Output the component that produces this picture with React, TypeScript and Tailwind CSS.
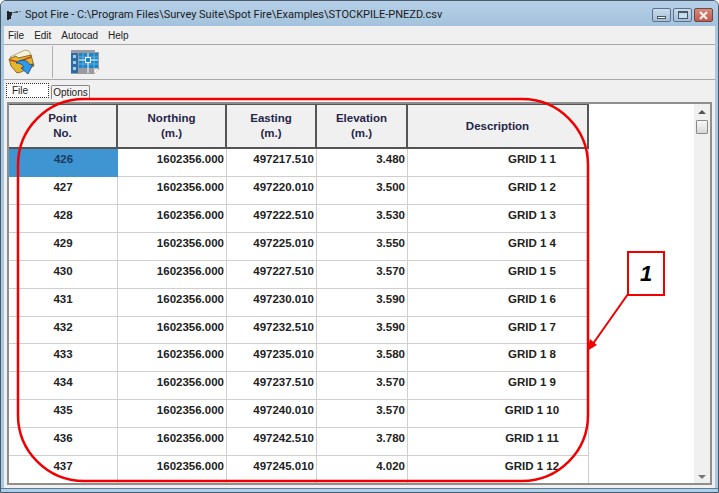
import React from "react";

const rows = [
  ["426", "497217.510", "3.480", "GRID 1 1"],
  ["427", "497220.010", "3.500", "GRID 1 2"],
  ["428", "497222.510", "3.530", "GRID 1 3"],
  ["429", "497225.010", "3.550", "GRID 1 4"],
  ["430", "497227.510", "3.570", "GRID 1 5"],
  ["431", "497230.010", "3.590", "GRID 1 6"],
  ["432", "497232.510", "3.590", "GRID 1 7"],
  ["433", "497235.010", "3.580", "GRID 1 8"],
  ["434", "497237.510", "3.570", "GRID 1 9"],
  ["435", "497240.010", "3.570", "GRID 1 10"],
  ["436", "497242.510", "3.780", "GRID 1 11"],
  ["437", "497245.010", "4.020", "GRID 1 12"],
];

const cols = "grid w-[580px] grid-cols-[109px_109px_90px_91px_181px]";

const HeaderCell: React.FC<{ lines: string[] }> = ({ lines }) => (
  <div className="flex flex-col items-center justify-center border-b-2 border-r-2 border-[#555] bg-[#f0f0f0] leading-[15px] text-[#26264a]">
    {lines.map((l) => (
      <span key={l}>{l}</span>
    ))}
  </div>
);

const TitleIcon = () => (
  <svg width="16" height="12" viewBox="0 0 16 12">
    <path d="M1 2h2v9H1zM3 3h3v3l-1 1v3H3z" fill="#222" />
    <path d="M6 3h3l1-1h2v2H7z" fill="#555" />
    <path d="M13 2h2v1h-2z" fill="#777" />
  </svg>
);

const FolderIcon = () => (
  <svg width="30" height="28" viewBox="0 0 30 28">
    <path d="M2 9l15-7 4 1 3 5-16 6z" fill="#f6f1d8" stroke="#9a8a50" strokeWidth="0.7" />
    <path d="M1 11l7-3 2 2 13-3 3 11-13 6-4 1-6-7z" fill="#e8b52e" stroke="#6e5412" strokeWidth="0.8" />
    <path d="M2 12l8 2 13-5" fill="none" stroke="#b5452a" strokeWidth="1.4" />
    <path d="M8 15c4-4 11-4 14 2l3-1-5 10-7-6 3-1c-2-3-5-4-8-4z" fill="#2f9be8" stroke="#123f80" strokeWidth="0.8" />
  </svg>
);

const MapIcon = () => (
  <svg width="30" height="26" viewBox="0 0 30 26">
    <path d="M1 1h24v2h4v17l-5 5H1z" fill="#9a9aa0" />
    <path d="M24 25l5-5v-1h-6z" fill="#e9e9e9" stroke="#777" strokeWidth="0.5" />
    <path d="M24 25v-5h5" fill="#fff" stroke="#888" strokeWidth="0.5" />
    <rect x="1" y="4" width="7" height="20" fill="#2a6ea8" />
    <rect x="3" y="6" width="3" height="3" fill="#a9c9e2" />
    <rect x="3" y="12" width="3" height="3" fill="#a9c9e2" />
    <rect x="3" y="18" width="3" height="3" fill="#a9c9e2" />
    <rect x="9" y="4" width="19" height="15" fill="#1d84c6" />
    <path d="M9 8h19M9 15h19M13 4v15M24 4v15" stroke="#7cc0ea" strokeWidth="0.7" />
    <path d="M18 4v20M9 11h19" stroke="#fff" strokeWidth="1" />
    <rect x="15.5" y="8.5" width="5" height="5" fill="#1d84c6" stroke="#fff" />
  </svg>
);

const WinButton: React.FC<{ kind: "min" | "max" | "close" }> = ({ kind }) => {
  if (kind === "close") {
    return (
      <div className="flex h-[14px] w-[19px] items-center justify-center rounded-[2px] border border-[#6b4a48] bg-gradient-to-b from-[#d9897c] to-[#c2574a]">
        <svg width="11" height="9" viewBox="0 0 11 9">
          <path d="M2 1l7 7M9 1L2 8" stroke="#f4f0ee" strokeWidth="2.2" />
        </svg>
      </div>
    );
  }
  return (
    <div className="flex h-[14px] w-[19px] items-center justify-center rounded-[2px] border border-[#5d7288] bg-gradient-to-b from-[#c9dcec] to-[#a4bed6]">
      {kind === "min" ? (
        <div className="mt-[5px] h-[3px] w-[9px] border border-[#48586a] bg-white" />
      ) : (
        <div className="h-[8px] w-[10px] border border-[#48586a] border-t-2 bg-[#c9dcec]" />
      )}
    </div>
  );
};

export default function App() {
  return (
    <div
      className="relative flex h-[493px] w-[719px] flex-col overflow-hidden rounded-t-[6px] border border-[#4a5a68] bg-[#a9c8e2] text-[#111]"
      style={{ fontFamily: '"Liberation Sans", Arial, sans-serif' }}
    >
      <div className="flex h-[25px] shrink-0 items-start justify-between bg-gradient-to-b from-[#b6d0e8] to-[#a4c2dd] pl-[5px] pr-[5px] pt-[7px]">
        <div className="flex items-center gap-[3px]">
          <TitleIcon />
          <span
            className="whitespace-nowrap text-[11px] leading-[14px] text-[#1b1b1b]"
            style={{ fontFamily: "Roboto, sans-serif" }}
          >
            Spot Fire - C:\Program Files\Survey Suite\Spot Fire\Examples\STOCKPILE-PNEZD.csv
          </span>
        </div>
        <div className="flex gap-[2px]">
          <WinButton kind="min" />
          <WinButton kind="max" />
          <WinButton kind="close" />
        </div>
      </div>

      <div className="mx-[3px] flex min-h-0 flex-1 flex-col bg-[#f0f0f0]">
        <div className="flex h-[18px] shrink-0 items-center gap-[10px] pl-[4px] text-[10px] text-[#222]">
          <span>File</span>
          <span>Edit</span>
          <span>Autocad</span>
          <span>Help</span>
        </div>

        <div className="flex h-[36px] shrink-0 items-center border-y border-[#a8a8a8] pl-[4px]">
          <FolderIcon />
          <div className="ml-[14px] h-[32px] w-px bg-[#b0b0b0]" />
          <div className="ml-[17px]">
            <MapIcon />
          </div>
        </div>

        <div className="flex h-[19px] shrink-0 items-end gap-[2px] pl-[2px] text-[10px] text-[#222]">
          <div className="mb-[1px] flex h-[15px] w-[43px] items-center border border-dotted border-[#333] bg-white pl-[5px]">
            File
          </div>
          <div className="flex h-[14px] w-[39px] items-center justify-center rounded-t-[2px] border border-b-0 border-[#888] bg-[#f4f4f4]">
            Options
          </div>
        </div>

        <div className="mx-[3px] mb-[3px] mt-[3px] flex min-h-0 flex-1 border-2 border-[#8f8f8f] bg-white">
          <div className="min-w-0 flex-1 overflow-hidden text-[11.5px] font-bold">
            <div className={`${cols} h-[45px] border-t border-[#555]`}>
              <HeaderCell lines={["Point", "No."]} />
              <HeaderCell lines={["Northing", "(m.)"]} />
              <HeaderCell lines={["Easting", "(m.)"]} />
              <HeaderCell lines={["Elevation", "(m.)"]} />
              <HeaderCell lines={["Description"]} />
            </div>
            {rows.map((r, i) => (
              <div key={r[0]} className={`${cols} h-[27.93px] leading-[20px] text-[#222]`}>
                <div
                  className={
                    i === 0
                      ? "bg-[#3f94d2] text-center text-[#1d3a5c]"
                      : "border-b border-r border-[#cfcfcf] text-center"
                  }
                >
                  {r[0]}
                </div>
                <div className="border-b border-r border-[#cfcfcf] pr-[2px] text-right">1602356.000</div>
                <div className="border-b border-r border-[#cfcfcf] pr-[2px] text-right">{r[1]}</div>
                <div className="border-b border-r border-[#cfcfcf] pr-[2px] text-right">{r[2]}</div>
                <div className="border-b border-r border-[#cfcfcf] pl-[68px] text-center">
                  <span className="inline-block w-[110px] text-center">{r[3]}</span>
                </div>
              </div>
            ))}
          </div>
          <div className="flex w-[16px] shrink-0 flex-col items-center bg-[#f0f0f0] pt-[6px]">
            <div className="h-0 w-0 border-x-[4px] border-b-[4px] border-x-transparent border-b-[#555]" />
            <div className="mt-[6px] h-[14px] w-[12px] rounded-[1px] border border-[#8a8a8a] bg-gradient-to-b from-[#f8f8f8] to-[#d8d8d8]" />
            <div className="mt-auto mb-[4px] h-0 w-0 border-x-[4px] border-t-[4px] border-x-transparent border-t-[#777]" />
          </div>
        </div>
      </div>
      <div className="h-[4px] shrink-0 border-t border-[#6a7a88] bg-[#a9d0ec]" />

      {/* red callout drawn over the grid */}
      <svg className="pointer-events-none absolute left-[-1px] top-[-1px]" width="719" height="493" viewBox="0 0 719 493">
        <rect x="18" y="99" width="570" height="382" rx="66" ry="66" fill="none" stroke="#f00000" strokeWidth="2.5" />
        <path d="M628 294L590 348" stroke="#f00000" strokeWidth="2" />
        <path d="M587 351l3-12 7 6z" fill="#f00000" />
      </svg>
      <div className="absolute left-[626px] top-[250px] flex h-[45px] w-[38px] items-center justify-center border-[2px] border-[#f00000] bg-white text-[22px] font-bold italic text-black">
        1
      </div>
    </div>
  );
}
